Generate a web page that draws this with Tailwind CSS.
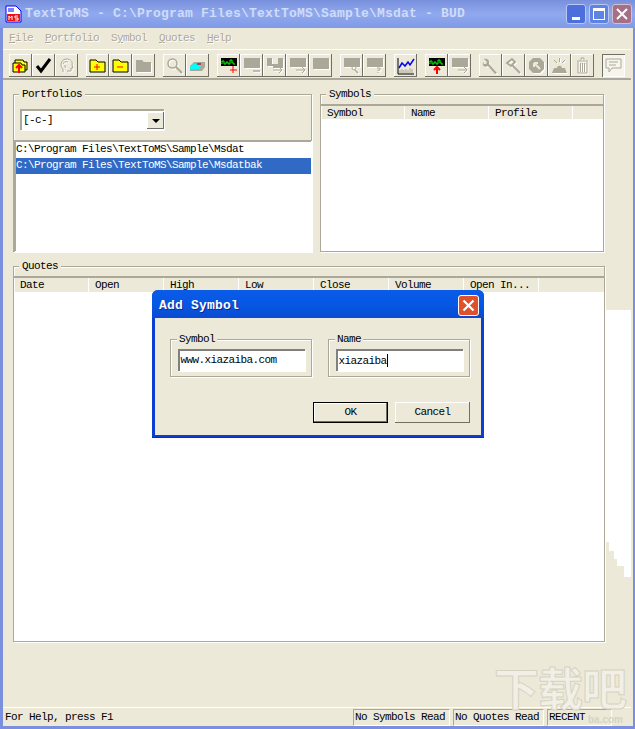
<!DOCTYPE html>
<html lang="en">
<head>
<meta charset="UTF-8">
<title>TextToMS</title>
<script src="https://cdn.jsdelivr.net/npm/@tailwindcss/browser@4"></script>
</head>
<body class="bg-[#ece9d8]">
<div class="relative w-[635px] h-[729px] overflow-hidden flex flex-col bg-[#ece9d8] font-['Liberation_Mono',monospace] text-[11px] tracking-[-0.6px] text-black">

  <!-- Watermark -->
  <div class="absolute left-[494px] top-[667px] font-['Noto_Sans_CJK_SC',sans-serif] font-bold text-[45px] leading-[40px] tracking-[-1px] text-[#f2f0e6] [-webkit-text-stroke:1px_#d6d3c2] pointer-events-none">下载吧</div>
  <div class="absolute left-[588px] top-[712px] font-['Liberation_Sans',sans-serif] font-bold text-[10px] tracking-normal text-[#d6d3c2] pointer-events-none">ba.com</div>

  <!-- Title bar -->
  <div class="h-[28px] shrink-0 flex items-center bg-gradient-to-b from-[#7890dc] via-[#90a9ee] to-[#7f99e6] pl-[5px]">
    <svg width="17" height="18" viewBox="0 0 17 18"><path d="M1 1h10l5 5v11H1z" fill="#fff" stroke="#00f"/><path d="M3 4h6M3 6h6" stroke="#00f"/><rect x="2" y="9" width="13" height="7" fill="#e11"/><path d="M4 15v-4l1.500 2 1.500-2v4M13 11h-3v2h3v2h-3" stroke="#fff" fill="none"/></svg>
    <span class="ml-[3px] font-bold text-[13px] tracking-[0.2px] text-[#cfdcf8] whitespace-pre">TextToMS - C:\Program Files\TextToMS\Sample\Msdat - BUD</span>
    <div class="ml-auto mr-[3px] flex gap-[3px]">
      <div class="w-[20px] h-[20px] rounded-[3px] bg-[#4c6fdb] border border-[#b8c8f2] flex items-end justify-center pb-[3px]"><div class="w-[8px] h-[3px] bg-white"></div></div>
      <div class="w-[20px] h-[20px] rounded-[3px] bg-[#5f83e3] border border-[#b8c8f2] flex items-center justify-center"><div class="w-[12px] h-[12px] border border-white border-t-[3px]"></div></div>
      <div class="w-[20px] h-[20px] rounded-[3px] bg-[#a56f86] border border-[#d3bfd0] flex items-center justify-center"><svg width="12" height="12" viewBox="0 0 12 12"><path d="M1 1l10 10M11 1L1 11" stroke="#fff" stroke-width="2"/></svg></div>
    </div>
  </div>

  <div class="flex-1 flex min-h-0">
    <div class="w-[3px] shrink-0 bg-[#7b8fdf]"></div>
    <div class="flex-1 flex flex-col min-w-0">

      <!-- Menu -->
      <div class="h-[21px] shrink-0 flex items-center text-[#aca899] [text-shadow:1px_1px_0_#fff]">
        <span class="ml-[6px] w-[36px]"><u>F</u>ile</span>
        <span class="w-[66px]"><u>P</u>ortfolio</span>
        <span class="w-[48px]">S<u>y</u>mbol</span>
        <span class="w-[48px]"><u>Q</u>uotes</span>
        <span><u>H</u>elp</span>
      </div>

      <!-- Toolbar -->
      <div class="h-[31px] shrink-0 flex items-start pt-[4px] pl-[6px] border-t border-white border-b-2 border-b-[#aca899]">
        <div class="flex">
          <div class="w-[23px] h-[23px] flex items-center justify-center shadow-[inset_-1px_-1px_0_#716f64,inset_1px_1px_0_#fff]">
            <svg width="17" height="17" viewBox="0 0 17 17"><path d="M3 3h8l1 2h3v8H3z" fill="#ff0" stroke="#000"/><path d="M1 6h8l1 2h3v7H1z" fill="#ff0" stroke="#000"/><path d="M7 16V9M4 11l3-3 3 3" stroke="#f00" stroke-width="2" fill="none"/></svg>
          </div>
          <div class="w-[23px] h-[23px] flex items-center justify-center shadow-[inset_-1px_-1px_0_#716f64,inset_1px_1px_0_#fff]">
            <svg width="17" height="17" viewBox="0 0 17 17"><path d="M2 9l4 5 9-12" stroke="#000" stroke-width="3" fill="none"/></svg>
          </div>
          <div class="w-[23px] h-[23px] flex items-center justify-center shadow-[inset_-1px_-1px_0_#716f64,inset_1px_1px_0_#fff]">
            <svg width="17" height="17" viewBox="0 0 17 17" class="[filter:drop-shadow(1px_1px_0_#fff)]"><path d="M5 15v-3C2 10 2 3 8 2c5 0 7 3 6 6l1 3h-2v3H9M5 7c0-2 3-3 5-2M6 9c2-1 2 1 1 2" stroke="#aca899" fill="none"/></svg>
          </div>
        </div>
        <div class="flex ml-[8px]">
          <div class="w-[23px] h-[23px] flex items-center justify-center shadow-[inset_-1px_-1px_0_#716f64,inset_1px_1px_0_#fff]">
            <svg width="17" height="17" viewBox="0 0 17 17"><path d="M1 15V3h6l2 2h7v10z" fill="#ff0" stroke="#000"/><path d="M8 7v6M5 10h6" stroke="#f00"/></svg>
          </div>
          <div class="w-[23px] h-[23px] flex items-center justify-center shadow-[inset_-1px_-1px_0_#716f64,inset_1px_1px_0_#fff]">
            <svg width="17" height="17" viewBox="0 0 17 17"><path d="M1 15V3h6l2 2h7v10z" fill="#ff0" stroke="#000"/><path d="M5 10h6" stroke="#f00"/></svg>
          </div>
          <div class="w-[23px] h-[23px] flex items-center justify-center shadow-[inset_-1px_-1px_0_#716f64,inset_1px_1px_0_#fff]">
            <svg width="17" height="17" viewBox="0 0 17 17" class="[filter:drop-shadow(1px_1px_0_#fff)]"><path d="M1 15V3h6l2 2h7v10z" fill="#aca899"/></svg>
          </div>
        </div>
        <div class="flex ml-[8px]">
          <div class="w-[23px] h-[23px] flex items-center justify-center shadow-[inset_-1px_-1px_0_#716f64,inset_1px_1px_0_#fff]">
            <svg width="17" height="17" viewBox="0 0 17 17" class="[filter:drop-shadow(1px_1px_0_#fff)]"><circle cx="6.500" cy="6.500" r="4.500" fill="none" stroke="#aca899" stroke-width="1.500"/><path d="M10 10l6 6" stroke="#aca899" stroke-width="2"/></svg>
          </div>
          <div class="w-[23px] h-[23px] flex items-center justify-center shadow-[inset_-1px_-1px_0_#716f64,inset_1px_1px_0_#fff]">
            <svg width="17" height="17" viewBox="0 0 17 17"><path d="M1 9l4-4h11v5l-3 4H1z" fill="#aca899"/><path d="M1 10l3-3h9l-3 5H1z" fill="#0ff"/><path d="M8 7h4" stroke="#f00" stroke-width="1.500"/></svg>
          </div>
        </div>
        <div class="flex ml-[8px]">
          <div class="w-[23px] h-[23px] flex items-center justify-center shadow-[inset_-1px_-1px_0_#716f64,inset_1px_1px_0_#fff]">
            <svg width="18" height="17" viewBox="0 0 18 17"><rect x="1" y="1" width="16" height="8" fill="#000"/><path d="M2 7V4h2v3h2V5h2v2h2V3h2v3h2v2" stroke="#0f0" fill="none"/><path d="M13 9v7M10 13h7" stroke="#f00"/></svg>
          </div>
          <div class="w-[23px] h-[23px] flex items-center justify-center shadow-[inset_-1px_-1px_0_#716f64,inset_1px_1px_0_#fff]">
            <svg width="18" height="17" viewBox="0 0 18 17" class="[filter:drop-shadow(1px_1px_0_#fff)]"><rect x="1" y="1" width="16" height="10" fill="#aca899"/><path d="M10 14h7" stroke="#aca899" stroke-width="1.500"/></svg>
          </div>
          <div class="w-[23px] h-[23px] flex items-center justify-center shadow-[inset_-1px_-1px_0_#716f64,inset_1px_1px_0_#fff]">
            <svg width="18" height="17" viewBox="0 0 18 17" class="[filter:drop-shadow(1px_1px_0_#fff)]"><path d="M1 1h5v6h6V1h5v10H7v-2H1z" fill="#aca899"/><path d="M7 13h9M13 10l3 3-3 3" stroke="#aca899" fill="none"/></svg>
          </div>
          <div class="w-[23px] h-[23px] flex items-center justify-center shadow-[inset_-1px_-1px_0_#716f64,inset_1px_1px_0_#fff]">
            <svg width="18" height="17" viewBox="0 0 18 17" class="[filter:drop-shadow(1px_1px_0_#fff)]"><rect x="1" y="1" width="16" height="9" fill="#aca899"/><path d="M7 13h9M13 10l3 3-3 3" stroke="#aca899" fill="none"/></svg>
          </div>
          <div class="w-[23px] h-[23px] flex items-center justify-center shadow-[inset_-1px_-1px_0_#716f64,inset_1px_1px_0_#fff]">
            <svg width="18" height="17" viewBox="0 0 18 17" class="[filter:drop-shadow(1px_1px_0_#fff)]"><rect x="1" y="1" width="16" height="11" fill="#aca899"/></svg>
          </div>
        </div>
        <div class="flex ml-[8px]">
          <div class="w-[23px] h-[23px] flex items-center justify-center shadow-[inset_-1px_-1px_0_#716f64,inset_1px_1px_0_#fff]">
            <svg width="18" height="17" viewBox="0 0 18 17" class="[filter:drop-shadow(1px_1px_0_#fff)]"><rect x="1" y="1" width="16" height="9" fill="#aca899"/><circle cx="11" cy="11" r="2" fill="none" stroke="#aca899"/><path d="M12 13l3 3" stroke="#aca899" stroke-width="1.500"/></svg>
          </div>
          <div class="w-[23px] h-[23px] flex items-center justify-center shadow-[inset_-1px_-1px_0_#716f64,inset_1px_1px_0_#fff]">
            <svg width="18" height="17" viewBox="0 0 18 17" class="[filter:drop-shadow(1px_1px_0_#fff)]"><rect x="1" y="1" width="16" height="9" fill="#aca899"/><path d="M11 11h3v2h-2v1M12 15v1" stroke="#aca899" fill="none"/></svg>
          </div>
        </div>
        <div class="ml-[8px] w-[23px] h-[23px] flex items-center justify-center shadow-[inset_-1px_-1px_0_#716f64,inset_1px_1px_0_#fff]">
          <svg width="18" height="18" viewBox="0 0 18 18"><path d="M1 1v16h16" stroke="#000" fill="none"/><path d="M3 16v-3M5 16v-4M7 16v-3M9 16v-4M11 16v-3M13 16v-5M15 16v-4" stroke="#aca899"/><path d="M2 11l3-5 3 3 3-4 2 3 4-6" stroke="#00f" stroke-width="1.500" fill="none"/></svg>
        </div>
        <div class="flex ml-[8px]">
          <div class="w-[23px] h-[23px] flex items-center justify-center shadow-[inset_-1px_-1px_0_#716f64,inset_1px_1px_0_#fff]">
            <svg width="18" height="17" viewBox="0 0 18 17"><rect x="1" y="1" width="16" height="8" fill="#000"/><path d="M2 7V4h2v3h2V5h2v2h2V3h2v3h2v2" stroke="#0f0" fill="none"/><path d="M9 17V10M6 13l3-3 3 3" stroke="#f00" stroke-width="2" fill="none"/></svg>
          </div>
          <div class="w-[23px] h-[23px] flex items-center justify-center shadow-[inset_-1px_-1px_0_#716f64,inset_1px_1px_0_#fff]">
            <svg width="18" height="17" viewBox="0 0 18 17" class="[filter:drop-shadow(1px_1px_0_#fff)]"><rect x="1" y="1" width="16" height="9" fill="#aca899"/><path d="M7 13h9M13 10l3 3-3 3" stroke="#aca899" fill="none"/></svg>
          </div>
        </div>
        <div class="flex ml-[8px]">
          <div class="w-[23px] h-[23px] flex items-center justify-center shadow-[inset_-1px_-1px_0_#716f64,inset_1px_1px_0_#fff]">
            <svg width="17" height="17" viewBox="0 0 17 17" class="[filter:drop-shadow(1px_1px_0_#fff)]"><path d="M15 16L7 7c1-3-1-6-5-5l3 3-1 2-2 0-1-2C0 9 3 11 6 9l7 8z" fill="#aca899"/></svg>
          </div>
          <div class="w-[23px] h-[23px] flex items-center justify-center shadow-[inset_-1px_-1px_0_#716f64,inset_1px_1px_0_#fff]">
            <svg width="17" height="17" viewBox="0 0 17 17" class="[filter:drop-shadow(1px_1px_0_#fff)]"><path d="M2 6l5-4 3 3-4 4zM7 8l8 8" stroke="#aca899" stroke-width="2" fill="none"/></svg>
          </div>
          <div class="w-[23px] h-[23px] flex items-center justify-center shadow-[inset_-1px_-1px_0_#716f64,inset_1px_1px_0_#fff]">
            <svg width="17" height="17" viewBox="0 0 17 17" class="[filter:drop-shadow(1px_1px_0_#fff)]"><path d="M5 1h7l4 4v7l-4 4H5l-4-4V5z" fill="#aca899"/><path d="M6 6h4M6 6v4M6 6l6 6" stroke="#ece9d8" stroke-width="2"/></svg>
          </div>
          <div class="w-[23px] h-[23px] flex items-center justify-center shadow-[inset_-1px_-1px_0_#716f64,inset_1px_1px_0_#fff]">
            <svg width="17" height="17" viewBox="0 0 17 17" class="[filter:drop-shadow(1px_1px_0_#fff)]"><path d="M1 16l2-5h3c0-3 5-3 5 0h3l2 5z" fill="#aca899"/><path d="M8.500 1v4M3 3l3 3M14 3l-3 3" stroke="#aca899"/></svg>
          </div>
          <div class="w-[23px] h-[23px] flex items-center justify-center shadow-[inset_-1px_-1px_0_#716f64,inset_1px_1px_0_#fff]">
            <svg width="17" height="17" viewBox="0 0 17 17" class="[filter:drop-shadow(1px_1px_0_#fff)]"><path d="M3 4h11M7 3V1h3v2M4 5v11h9V5M6.500 6v9M8.500 6v9M10.500 6v9" stroke="#aca899" fill="none"/></svg>
          </div>
        </div>
        <div class="ml-[8px] w-[23px] h-[23px] flex items-center justify-center bg-[#f6f4ec] shadow-[inset_1px_1px_0_#716f64,inset_-1px_-1px_0_#fff]">
          <svg width="17" height="17" viewBox="0 0 17 17"><path d="M1 2h15v9H7l-3 4v-4H1z" fill="none" stroke="#aca899"/><path d="M4 5h9M4 8h7" stroke="#aca899"/></svg>
        </div>
      </div>

      <!-- Portfolios and Symbols -->
      <div class="flex mt-[14px] ml-[10px] gap-[8px] h-[158px] shrink-0">
        <div class="relative w-[299px] flex flex-col border border-[#aca899] shadow-[inset_1px_1px_0_#fff,1px_1px_0_#fff]">
          <span class="absolute -top-[7px] left-[5px] px-[3px] bg-[#ece9d8] leading-[12px]">Portfolios</span>
          <div class="mt-[14px] ml-[6px] w-[144px] h-[21px] flex items-center bg-white border-t-2 border-l-2 border-[#aca899] shadow-[1px_1px_0_#fff] pl-[1px]">
            <span class="flex-1">[-c-]</span>
            <div class="w-[17px] h-[17px] bg-[#ece9d8] flex items-center justify-center shadow-[inset_-1px_-1px_0_#716f64,inset_1px_1px_0_#fff]">
              <div class="border-x-[4px] border-x-transparent border-t-[4px] border-t-black"></div>
            </div>
          </div>
          <div class="mt-[10px] flex-1 bg-white border-t-2 border-l-2 border-[#aca899] shadow-[1px_1px_0_#fff]">
            <div class="h-[16px] leading-[14px] whitespace-pre">C:\Program Files\TextToMS\Sample\Msdat</div>
            <div class="h-[16px] leading-[14px] whitespace-pre bg-[#316ac5] text-white">C:\Program Files\TextToMS\Sample\Msdatbak</div>
          </div>
        </div>
        <div class="relative w-[284px] flex flex-col border border-[#aca899] shadow-[inset_1px_1px_0_#fff,1px_1px_0_#fff]">
          <span class="absolute -top-[7px] left-[5px] px-[3px] bg-[#ece9d8] leading-[12px]">Symbols</span>
          <div class="mt-[9px] h-[16px] flex border-t-2 border-[#aca899] border-b border-b-white">
            <div class="w-[84px] pl-[6px] border-r border-white leading-[15px]">Symbol</div>
            <div class="w-[84px] pl-[6px] border-r border-white leading-[15px]">Name</div>
            <div class="w-[84px] pl-[6px] border-r border-white leading-[15px]">Profile</div>
          </div>
          <div class="flex-1 bg-white"></div>
        </div>
      </div>

      <!-- Quotes -->
      <div class="relative mt-[14px] ml-[10px] w-[592px] h-[376px] shrink-0 flex flex-col border border-[#aca899] shadow-[inset_1px_1px_0_#fff,1px_1px_0_#fff]">
        <span class="absolute -top-[7px] left-[5px] px-[3px] bg-[#ece9d8] leading-[12px]">Quotes</span>
        <div class="mt-[9px] h-[17px] flex border-t-2 border-[#aca899] border-b border-b-white">
          <div class="w-[75px] pl-[6px] border-r border-white leading-[15px]">Date</div>
          <div class="w-[75px] pl-[6px] border-r border-white leading-[15px]">Open</div>
          <div class="w-[75px] pl-[6px] border-r border-white leading-[15px]">High</div>
          <div class="w-[75px] pl-[6px] border-r border-white leading-[15px]">Low</div>
          <div class="w-[75px] pl-[6px] border-r border-white leading-[15px]">Close</div>
          <div class="w-[75px] pl-[6px] border-r border-white leading-[15px]">Volume</div>
          <div class="w-[75px] pl-[6px] border-r border-white leading-[15px]">Open In...</div>
        </div>
        <div class="flex-1 bg-white"></div>
      </div>

      <div class="flex-1"></div>

      <!-- Status bar -->
      <div class="h-[19px] shrink-0 flex items-center border-t border-white">
        <span class="flex-1 pl-[2px]">For Help, press F1</span>
        <div class="w-[97px] h-[17px] mr-[3px] pl-[1px] leading-[15px] border border-[#aca899] border-r-white border-b-white"><span>No Symbols Read</span></div>
        <div class="w-[91px] h-[17px] mr-[3px] pl-[1px] leading-[15px] border border-[#aca899] border-r-white border-b-white"><span>No Quotes Read</span></div>
        <div class="w-[65px] h-[17px] mr-[19px] pl-[1px] leading-[15px] border border-[#aca899] border-r-white border-b-white"><span>RECENT</span></div>
      </div>
    </div>
    <div class="w-[4px] shrink-0 flex">
      <div class="w-[2px] bg-[#ece9d8]"></div>
      <div class="flex-1 bg-[#7b8fdf]"></div>
    </div>
  </div>
  <div class="h-[3px] shrink-0 bg-[#7b8fdf]"></div>

  <!-- Leftover repaint to the right of the quotes panel -->
  <div class="absolute left-[606px] top-[310px] w-[25px] h-[267px] bg-white"></div>
  <div class="absolute left-[606px] top-[542px] w-[3px] h-[35px] bg-[#ece9d8]"></div>
  <div class="absolute left-[609px] top-[551px] w-[5px] h-[26px] bg-[#ece9d8]"></div>
  <div class="absolute left-[614px] top-[559px] w-[3px] h-[18px] bg-[#ece9d8]"></div>
  <div class="absolute left-[617px] top-[566px] w-[7px] h-[11px] bg-[#ece9d8]"></div>

  <!-- Add Symbol dialog -->
  <div class="absolute left-[152px] top-[290px] w-[332px] h-[148px] flex flex-col rounded-t-[6px] bg-[#0a3fd0] shadow-[inset_0_-1px_0_#0831a8]">
    <div class="h-[28px] shrink-0 flex items-center rounded-t-[6px] bg-gradient-to-b from-[#0a5be8] via-[#0558e4] to-[#0a4ad0] pl-[7px] pr-[5px]">
      <span class="mt-[4px] font-bold text-[13px] tracking-[0.2px] text-white [text-shadow:1px_1px_0_#0a2a90]">Add Symbol</span>
      <div class="ml-auto mt-[2px] w-[21px] h-[21px] rounded-[3px] bg-[#e0502a] border border-white flex items-center justify-center">
        <svg width="13" height="13" viewBox="0 0 13 13"><path d="M1.500 1.500l10 10M11.500 1.500l-10 10" stroke="#fff" stroke-width="2.200"/></svg>
      </div>
    </div>
    <div class="flex-1 mx-[3px] mb-[3px] bg-[#ece9d8] flex flex-col pl-[15px] pr-[11px]">
      <div class="flex gap-[16px] mt-[21px]">
        <div class="relative w-[142px] h-[38px] flex items-center justify-center border border-[#aca899] shadow-[inset_1px_1px_0_#fff,1px_1px_0_#fff]">
          <span class="absolute -top-[7px] left-[6px] px-[2px] bg-[#ece9d8] leading-[12px]">Symbol</span>
          <div class="w-[127px] h-[22px] mt-[3px] pl-[1px] bg-white border-t-2 border-l-2 border-[#808080] shadow-[1px_1px_0_#fff] leading-[18px]">www.xiazaiba.com</div>
        </div>
        <div class="relative w-[142px] h-[38px] flex items-center justify-center border border-[#aca899] shadow-[inset_1px_1px_0_#fff,1px_1px_0_#fff]">
          <span class="absolute -top-[7px] left-[6px] px-[2px] bg-[#ece9d8] leading-[12px]">Name</span>
          <div class="w-[127px] h-[22px] mt-[3px] pl-[1px] bg-white border-t-2 border-l-2 border-[#808080] shadow-[1px_1px_0_#fff] leading-[18px] flex items-center">xiazaiba<div class="w-px h-[13px] bg-black"></div></div>
        </div>
      </div>
      <div class="flex justify-end gap-[7px] mt-[25px]">
        <div class="w-[75px] h-[21px] flex items-center justify-center border border-black shadow-[inset_-1px_-1px_0_#716f64,inset_1px_1px_0_#fff]">OK</div>
        <div class="w-[75px] h-[21px] flex items-center justify-center shadow-[inset_-1px_-1px_0_#716f64,inset_1px_1px_0_#fff]">Cancel</div>
      </div>
    </div>
  </div>
</div>
</body>
</html>
